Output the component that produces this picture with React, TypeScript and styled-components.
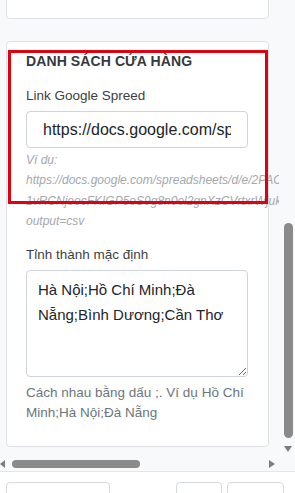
import styled, { createGlobalStyle } from "styled-components";

const GlobalStyle = createGlobalStyle`
  * {
    box-sizing: border-box;
  }

  html,
  body {
    margin: 0;
    padding: 0;
    background: #f8f9fa;
    font-family: "Liberation Sans", Arial, sans-serif;
    color: #212529;
  }
`;

export default function App() {
  return (
    <>
      <GlobalStyle />
      <Screen>
        <ScrollArea>
          <Pane>
            <Card $offset={101}>
              <FieldLabel>Trạng thái</FieldLabel>
              <TextInput readOnly value="Đang hoạt động" />
            </Card>

            <Card>
              <Highlight />
              <Heading>DANH SÁCH CỬA HÀNG</Heading>

              <FieldLabel>Link Google Spreed</FieldLabel>
              <TextInput
                readOnly
                value="https://docs.google.com/spreadsheets/d/e/2PACX-1vRCNjeocFKIGP5oS9g8n0el2gnXzCVrtxrWjukuM/pub?output=csv"
              />
              <Example>
                Ví dụ:
                <br />
                https://docs.google.com/spreadsheets/d/e/2PACX-
                <br />
                1vRCNjeocFKIGP5oS9g8n0el2gnXzCVrtxrWjukuMqY7x3pBd/pub?
                <br />
                output=csv
              </Example>

              <FieldLabel $gap>Tỉnh thành mặc định</FieldLabel>
              <TextArea
                readOnly
                defaultValue="Hà Nội;Hồ Chí Minh;Đà Nẵng;Bình Dương;Cần Thơ"
              />
              <Hint>Cách nhau bằng dấu ;. Ví dụ Hồ Chí Minh;Hà Nội;Đà Nẵng</Hint>
            </Card>
          </Pane>

          <VBar>
            <VThumb />
            <Arrow $dir="down" />
          </VBar>
        </ScrollArea>

        <HBar>
          <Arrow $dir="left" />
          <HThumb />
          <Spacer />
          <Arrow $dir="right" />
          <Corner />
        </HBar>

        <Footer>
          <FooterButton $width={104}>Quay lại</FooterButton>
          <Spacer />
          <FooterButton $width={46}>Xem</FooterButton>
          <FooterButton $width={57}>Lưu</FooterButton>
        </Footer>
      </Screen>
    </>
  );
}

const Screen = styled.div`
  width: 295px;
  height: 493px;
  overflow: hidden;
  display: flex;
  flex-direction: column;
`;

const ScrollArea = styled.div`
  display: flex;
  flex-shrink: 0;
  height: 455px;
`;

const Pane = styled.div`
  width: 279px;
  overflow: hidden;
  display: flex;
  flex-direction: column;
  gap: 22px;
  padding-left: 6px;
`;

const Card = styled.div<{ $offset?: number }>`
  position: relative;
  flex-shrink: 0;
  width: 263px;
  margin-top: ${(p) => (p.$offset ? `-${p.$offset}px` : "0")};
  height: ${(p) => (p.$offset ? "120px" : "auto")};
  padding: 9px 20px 23px 19px;
  background: #ffffff;
  border: 1px solid #dee2e6;
  border-radius: 4px;
`;

const Highlight = styled.div`
  position: absolute;
  top: 8px;
  left: 1px;
  right: 0;
  height: 154px;
  border: 3px solid #e1000f;
  pointer-events: none;
`;

const Heading = styled.div`
  font-size: 14px;
  line-height: 20px;
  font-weight: 700;
  letter-spacing: 0.1px;
  color: #343a40;
  margin-bottom: 15px;
`;

const FieldLabel = styled.div<{ $gap?: boolean }>`
  font-size: 13.5px;
  line-height: 20px;
  color: #3b3f44;
  margin-top: ${(p) => (p.$gap ? "14px" : "0")};
  margin-bottom: 5px;
`;

const TextInput = styled.input`
  display: block;
  width: 222px;
  height: 37px;
  padding: 0 16px;
  font-family: inherit;
  font-size: 16px;
  color: #212529;
  background: #ffffff;
  border: 1px solid #ced4da;
  border-radius: 4px;
  outline: none;
`;

const Example = styled.div`
  margin-top: 2px;
  font-size: 12px;
  line-height: 20.3px;
  font-style: italic;
  color: #a3a8ad;
  white-space: nowrap;
`;

const TextArea = styled.textarea`
  display: block;
  width: 222px;
  height: 107px;
  padding: 6px 16px 6px 11px;
  font-family: inherit;
  font-size: 15px;
  line-height: 25px;
  color: #212529;
  background: #ffffff;
  border: 1px solid #ced4da;
  border-radius: 4px;
  outline: none;
  resize: vertical;
`;

const Hint = styled.div`
  margin-top: 6px;
  font-size: 13.5px;
  line-height: 20px;
  color: #6c757d;
`;

const VBar = styled.div`
  flex: 1;
  display: flex;
  flex-direction: column;
  justify-content: flex-end;
  align-items: flex-start;
  padding-left: 5px;
`;

const VThumb = styled.div`
  width: 9px;
  height: 215px;
  border-radius: 5px;
  background: #8a8a8a;
  margin-bottom: 8px;
`;

const Arrow = styled.div<{ $dir: "down" | "left" | "right" }>`
  width: 0;
  height: 0;
  flex-shrink: 0;
  ${(p) =>
    p.$dir === "down"
      ? `
    border-left: 4px solid transparent;
    border-right: 4px solid transparent;
    border-top: 6px solid #7d7d7d;
    margin-bottom: 3px;
  `
      : p.$dir === "left"
      ? `
    border-top: 4px solid transparent;
    border-bottom: 4px solid transparent;
    border-right: 5px solid #7d7d7d;
  `
      : `
    border-top: 4.5px solid transparent;
    border-bottom: 4.5px solid transparent;
    border-left: 6px solid #7d7d7d;
  `}
`;

const HBar = styled.div`
  display: flex;
  flex-shrink: 0;
  align-items: center;
  height: 16px;
  padding-top: 2px;
`;

const HThumb = styled.div`
  width: 128px;
  height: 8px;
  margin-left: 7px;
  border-radius: 4px;
  background: #8a8a8a;
`;

const Spacer = styled.div`
  flex: 1;
`;

const Corner = styled.div`
  width: 20px;
`;

const Footer = styled.div`
  flex: 1;
  min-height: 0;
  overflow: hidden;
  display: flex;
  align-items: flex-start;
  gap: 5px;
  padding: 10px 11px 0 6px;
  background: #ffffff;
  border-top: 1px solid #e6e6e6;
`;

const FooterButton = styled.button<{ $width: number }>`
  flex-shrink: 0;
  width: ${(p) => p.$width}px;
  height: 38px;
  padding: 14px 0 0;
  font-family: inherit;
  font-size: 14px;
  line-height: 36px;
  color: #495057;
  background: #ffffff;
  border: 1px solid #d6d9dc;
  border-radius: 4px;
`;
